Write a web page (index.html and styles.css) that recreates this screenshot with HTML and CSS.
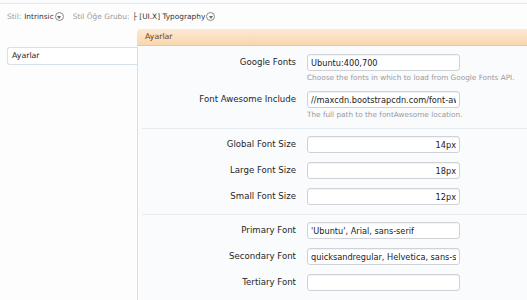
FILE: index.html
```html
<!DOCTYPE html>
<html lang="tr">
<head>
  <meta charset="UTF-8" />
  <title>Ayarlar</title>
  <link rel="stylesheet" href="styles.css">
</head>
<body>
  <div class="crumbs">
    <span class="muted">Stil:</span> <span>Intrinsic</span><span class="drop"></span>
    <span class="muted gap">Stil Öğe Grubu:</span> <span>├ [UI.X] Typography</span><span class="drop"></span>
  </div>

  <div class="layout">
    <div class="sidebar">
      <div class="tab">Ayarlar</div>
    </div>

    <div class="main">
      <div class="heading">Ayarlar</div>

      <div class="row">
        <span class="label">Google Fonts</span>
        <div class="field">
          <input type="text" value="Ubuntu:400,700" />
          <div class="hint">Choose the fonts in which to load from Google Fonts API.</div>
        </div>
      </div>

      <div class="row">
        <span class="label">Font Awesome Include</span>
        <div class="field">
          <input type="text" value="//maxcdn.bootstrapcdn.com/font-awesome/4.3.0/css/font-awesome.min.css" />
          <div class="hint">The full path to the fontAwesome location.</div>
        </div>
      </div>

      <div class="sep"></div>

      <div class="row">
        <span class="label">Global Font Size</span>
        <div class="field"><input type="text" class="num" value="14px" /></div>
      </div>
      <div class="row">
        <span class="label">Large Font Size</span>
        <div class="field"><input type="text" class="num" value="18px" /></div>
      </div>
      <div class="row">
        <span class="label">Small Font Size</span>
        <div class="field"><input type="text" class="num" value="12px" /></div>
      </div>

      <div class="sep"></div>

      <div class="row">
        <span class="label">Primary Font</span>
        <div class="field"><input type="text" value="'Ubuntu', Arial, sans-serif" /></div>
      </div>
      <div class="row">
        <span class="label">Secondary Font</span>
        <div class="field"><input type="text" value="quicksandregular, Helvetica, sans-serif" /></div>
      </div>
      <div class="row">
        <span class="label">Tertiary Font</span>
        <div class="field"><input type="text" value="" /></div>
      </div>
    </div>
  </div>
</body>
</html>
```

FILE: styles.css
```css
body {
  margin: 0;
  font-family: "DejaVu Sans", Verdana, sans-serif;
  font-size: 8.6px;
  color: #262626;
  background: #fafbfd;
}
.crumbs {
  border-top: 1px solid #e3e8ee;
  margin-top: 3px;
  height: 25px;
  padding-left: 7px;
  display: flex;
  align-items: center;
  font-size: 7.4px;
  color: #333;
  background: #fdfdfe;
}
.crumbs .muted { color: #9a9a9a; margin-right: 3px; }
.crumbs .gap { margin-left: 9px; }
.drop {
  display: inline-block;
  width: 7px;
  height: 7px;
  border: 1px solid #8a8a8a;
  border-radius: 50%;
  margin-left: 1px;
  position: relative;
}
.drop::after {
  content: "";
  position: absolute;
  left: 1.5px;
  top: 2.5px;
  border-left: 2px solid transparent;
  border-right: 2px solid transparent;
  border-top: 3px solid #6a6a6a;
}
.layout {
  display: grid;
  grid-template-columns: 137px 1fr;
}
.sidebar {
  padding-top: 18px;
  padding-left: 7px;
  background: #fdfdfe;
}
.tab {
  height: 16px;
  line-height: 16px;
  padding-left: 4px;
  border: 1px solid #d6e0e8;
  border-right: none;
  border-radius: 3px 0 0 3px;
  background: #ffffff;
  font-size: 7.8px;
  color: #222;
}
.main {
  border-left: 1px solid #d6e0e8;
  margin-top: 18px;
  position: relative;
  padding-top: 3px;
  min-height: 260px;
}
.heading {
  position: absolute;
  left: -1px;
  right: 0;
  top: -18px;
  height: 16px;
  line-height: 16px;
  padding-left: 8px;
  background: linear-gradient(#fde9d3, #f9d7ae);
  border-bottom: 1px solid #f0c48e;
  border-radius: 4px 0 0 0;
  color: #6b3d12;
  font-size: 7.8px;
}
.row {
  display: flex;
  align-items: flex-start;
  padding: 4px 0 5px;
}
.label {
  width: 169px;
  padding-right: 11px;
  box-sizing: border-box;
  text-align: right;
  line-height: 17px;
  flex-shrink: 0;
}
.field { width: 153px; }
input {
  display: block;
  width: 153px;
  height: 17px;
  box-sizing: border-box;
  margin: 0;
  padding: 0 3px;
  border: 1px solid #cfd3d8;
  border-radius: 3px;
  background: #fff;
  box-shadow: inset 0 1px 1px rgba(0, 0, 0, 0.05);
  font-family: "DejaVu Sans", Verdana, sans-serif;
  font-size: 8.2px;
  color: #222;
}
input.num { text-align: right; }
.hint {
  margin-top: 2px;
  height: 9px;
  line-height: 9px;
  font-size: 7.3px;
  color: #9a9a9a;
  white-space: nowrap;
}
.sep {
  margin: 4px 0 3px 4px;
  border-top: 1px solid #e4ebf1;
}
```
